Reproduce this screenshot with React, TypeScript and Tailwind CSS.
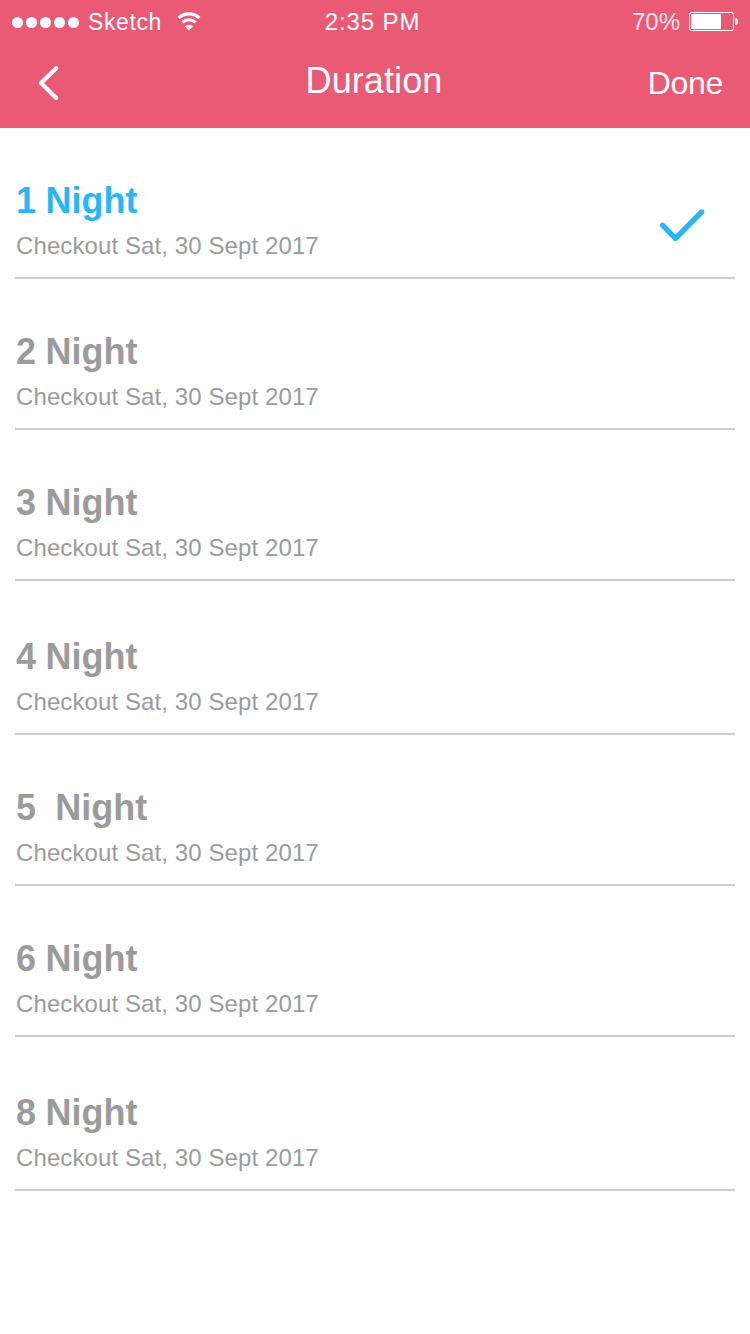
type Stay = {
  label: string;
  checkout: string;
  height: string;
};

const CHECKOUT = "Checkout Sat, 30 Sept 2017";

const STAYS: Stay[] = [
  { label: "1 Night", checkout: CHECKOUT, height: "h-[151px]" },
  { label: "2 Night", checkout: CHECKOUT, height: "h-[151px]" },
  { label: "3 Night", checkout: CHECKOUT, height: "h-[151px]" },
  { label: "4 Night", checkout: CHECKOUT, height: "h-[154px]" },
  { label: "5  Night", checkout: CHECKOUT, height: "h-[151px]" },
  { label: "6 Night", checkout: CHECKOUT, height: "h-[151px]" },
  { label: "8 Night", checkout: CHECKOUT, height: "h-[154px]" },
];

function WifiIcon() {
  return (
    <svg width="24" height="19" viewBox="0 0 24 19" fill="none">
      <path d="M1.6 5.8a15.6 15.6 0 0 1 20.8 0" stroke="white" strokeWidth="3.1" />
      <path d="M5.4 10.3a9.8 9.8 0 0 1 13.2 0" stroke="white" strokeWidth="3.1" />
      <path d="M8 14.3a5.8 5.8 0 0 1 8 0L12 18.6Z" fill="white" />
    </svg>
  );
}

function BatteryIcon() {
  return (
    <svg width="50" height="20" viewBox="0 0 50 20" fill="none">
      <rect x="0.5" y="0.5" width="44" height="18" rx="2" stroke="white" />
      <rect x="2" y="2" width="30" height="15" rx="0.5" fill="white" />
      <path d="M46 6a3 3 0 0 1 3 3v1a3 3 0 0 1-3 3Z" fill="white" />
    </svg>
  );
}

function StatusBar() {
  return (
    <div className="grid h-10 grid-cols-3 pt-[2px] text-2xl leading-10">
      <div className="flex h-10 items-center pl-3">
        <div className="flex gap-[3px]">
          {[0, 1, 2, 3, 4].map((dot) => (
            <span key={dot} className="size-[11px] rounded-full bg-white" />
          ))}
        </div>
        <span className="ml-[9px] text-[23px] tracking-[0.6px]">Sketch</span>
        <span className="mb-px ml-[15px]">
          <WifiIcon />
        </span>
      </div>
      <span className="pr-[5px] text-center tracking-[0.9px]">2:35 PM</span>
      <div className="flex h-10 items-center justify-end pr-[11px]">
        <span className="mr-[9px] opacity-85">70%</span>
        <BatteryIcon />
      </div>
    </div>
  );
}

function NavBar() {
  return (
    <div className="grid h-[88px] grid-cols-3 items-start">
      <button type="button" aria-label="Back" className="ml-9 mt-6 w-6">
        <svg width="24" height="38" viewBox="0 0 24 38" fill="none">
          <path
            d="M20.2 4.2 5 19l15.2 15"
            stroke="white"
            strokeWidth="4.2"
            strokeLinecap="round"
            strokeLinejoin="round"
          />
        </svg>
      </button>
      <h1 className="mt-[21px] pr-[2px] text-center text-4xl tracking-[0.1px]">Duration</h1>
      <button
        type="button"
        className="mr-[27px] mt-[23px] text-right text-[32px] leading-10 tracking-[-0.3px]"
      >
        Done
      </button>
    </div>
  );
}

function StayRow({ stay, selected }: { stay: Stay; selected: boolean }) {
  return (
    <li
      className={`flex items-end justify-between border-b-2 border-[#cccccc] ${stay.height}`}
    >
      <div className="pb-[17px] pl-px">
        <h2
          className={`whitespace-pre text-4xl font-bold [word-spacing:-0.4px] ${
            selected ? "text-[#29b6f6]" : "text-[#9b9b9b]"
          }`}
        >
          {stay.label}
        </h2>
        <p className="mt-[11px] text-2xl leading-7 tracking-[0.1px] text-[#9b9b9b]">
          {stay.checkout}
        </p>
      </div>
      {selected && (
        <svg className="mb-[33px] mr-[29px]" width="48" height="36" viewBox="0 0 48 36" fill="none">
          <path
            d="M4.7 17.3 17.5 30.3 43.6 4"
            stroke="#29b6f6"
            strokeWidth="5.4"
            strokeLinecap="round"
            strokeLinejoin="round"
          />
        </svg>
      )}
    </li>
  );
}

export default function App() {
  return (
    <main className="h-[1334px] w-[750px] bg-white font-['Liberation_Sans',Arial,sans-serif]">
      <header className="h-32 bg-[#eb5a75] text-white">
        <StatusBar />
        <NavBar />
      </header>
      <ul className="mx-[15px]">
        {STAYS.map((stay, index) => (
          <StayRow key={stay.label} stay={stay} selected={index === 0} />
        ))}
      </ul>
    </main>
  );
}
